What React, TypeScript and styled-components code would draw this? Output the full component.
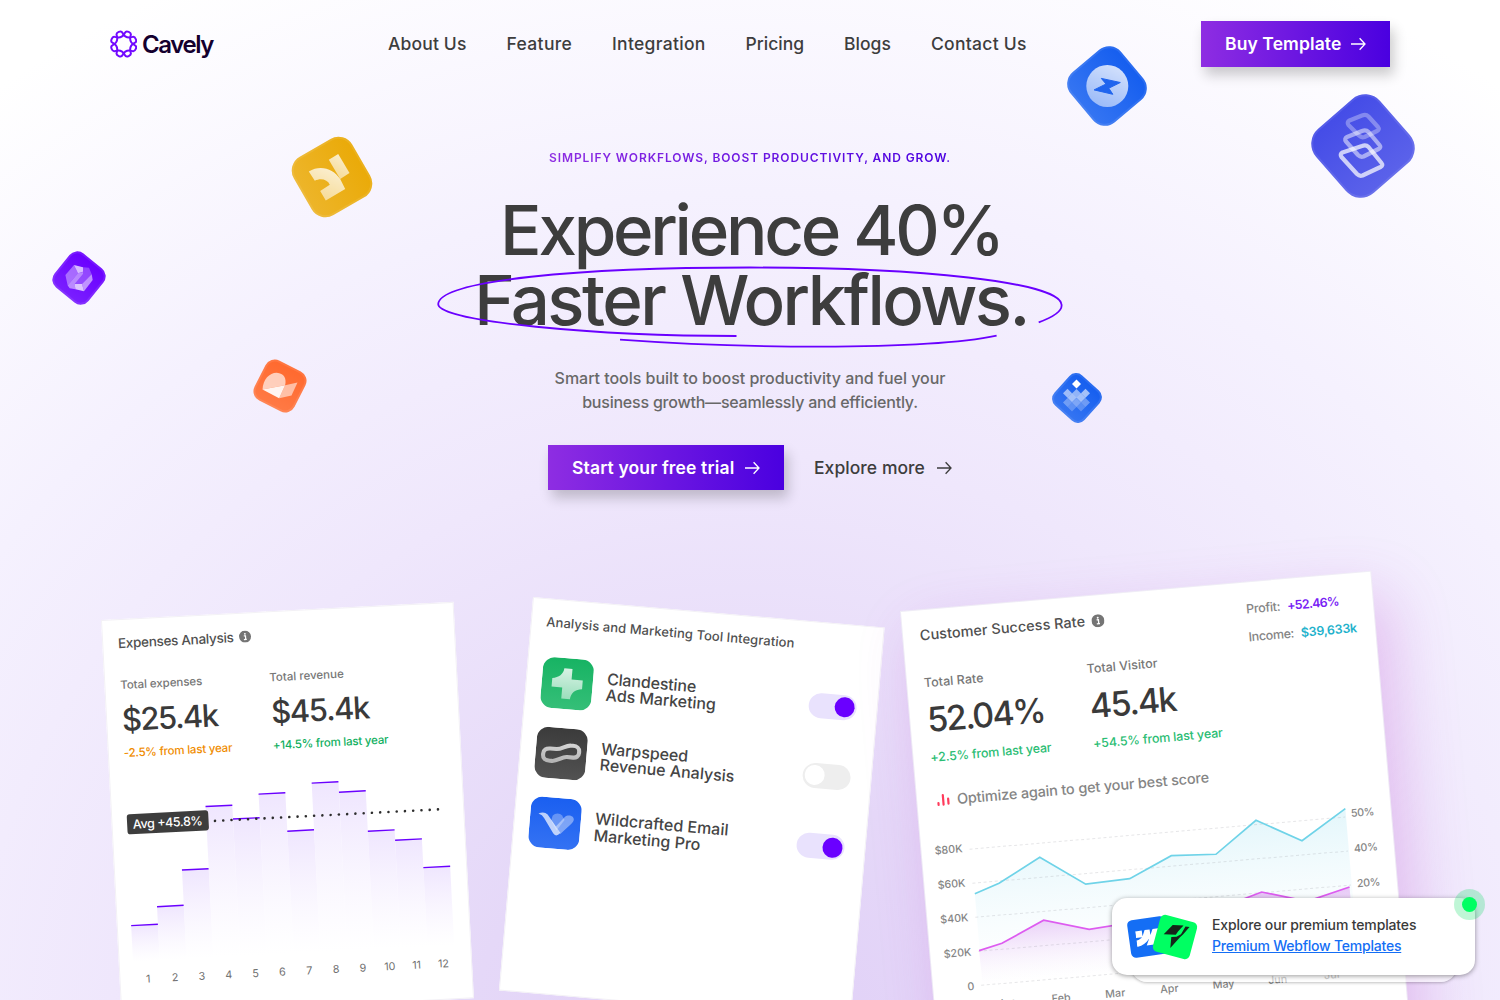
import React from "react";
import styled, { createGlobalStyle } from "styled-components";
import { SiWebflow } from "react-icons/si";

const Global = createGlobalStyle`
  * { box-sizing: border-box; }
  html, body { margin: 0; padding: 0; }
  body { font-family: Inter, "Liberation Sans", sans-serif; color: #3d3d3d; overflow: hidden; }
`;

const Page = styled.div`
  position: relative;
  width: 1500px;
  height: 1000px;
  overflow: hidden;
  background: radial-gradient(ellipse 1280px 1190px at 750px 1050px, #e0cff7 0%, #e5d8f8 22%, #efe7fc 50%, #f5f1fe 72%, #ffffff 100%);
`;

const T = styled.span<{ $ls?: number }>`
  display: block;
  white-space: nowrap;
  letter-spacing: ${(p) => p.$ls ?? 0}px;
`;

/* ---------- header ---------- */
const Header = styled.header`
  display: flex;
  align-items: center;
  padding: 21px 110px 0;
  height: 67px;
`;
const Logo = styled.div`
  display: flex;
  align-items: center;
  gap: 4.5px;
  width: 103px;
`;
const LogoName = styled(T)`
  margin-top: 2px;
  font-size: 24px;
  font-weight: 600;
  line-height: 28px;
  color: #14002e;
`;
const Nav = styled.nav`
  display: flex;
  gap: 40px;
  margin-left: 175px;
`;
const NavLink = styled(T)<{ $w: number }>`
  width: ${(p) => p.$w}px;
  font-size: 17.5px;
  font-weight: 500;
  line-height: 24px;
`;
const Button = styled.a<{ $w: number }>`
  display: flex;
  align-items: center;
  justify-content: space-between;
  width: ${(p) => p.$w}px;
  height: 45.5px;
  padding: 0 24px;
  color: #fff;
  font-size: 17.5px;
  line-height: 22px;
  font-weight: 600;
  background: linear-gradient(90deg, #8e2de2, #4a00e0);
  box-shadow: 4px 8px 12px rgba(0, 0, 0, 0.2);
`;
const HeaderAction = styled.div`
  margin-left: auto;
`;

/* ---------- hero ---------- */
const Hero = styled.section`
  display: flex;
  flex-direction: column;
  align-items: center;
  padding-top: 82.6px;
`;
const Eyebrow = styled(T)`
  font-size: 12px;
  font-weight: 600;
  line-height: 16px;
  color: transparent;
  background: linear-gradient(90deg, #8e2de2, #4a00e0);
  background-clip: text;
`;
const Title = styled.h1`
  position: relative;
  display: flex;
  flex-direction: column;
  align-items: center;
  margin: 29.4px 0 0;
  font-size: 69px;
  font-weight: 450;
  line-height: 70px;
`;
const TitleLine = styled(T)`
  padding-left: 2px;
`;
const Scribble = styled.svg`
  position: absolute;
  left: 50%;
  top: 65px;
  margin-left: -320px;
`;
const Lead = styled.div`
  display: flex;
  flex-direction: column;
  align-items: center;
  margin-top: 31px;
  font-size: 16px;
  font-weight: 450;
  line-height: 24px;
  color: #686868;
`;
const Actions = styled.div`
  display: flex;
  align-items: center;
  gap: 30px;
  margin-top: 31px;
`;
const MoreLink = styled.a`
  display: flex;
  align-items: center;
  justify-content: space-between;
  width: 138px;
  font-size: 17.5px;
  font-weight: 500;
`;

/* ---------- floating tiles ---------- */
const Tile = styled.svg<{ $x: number; $y: number }>`
  position: absolute;
  left: ${(p) => p.$x}px;
  top: ${(p) => p.$y}px;
`;

/* ---------- cards ---------- */
const Cards = styled.section`
  display: flex;
  align-items: flex-start;
  margin-top: 81.5px;
`;
const Card = styled.article<{ $w: number; $h: number; $ml: number; $mt: number; $deg: number; $pad: string; $glow?: boolean }>`
  flex: none;
  width: ${(p) => p.$w}px;
  height: ${(p) => p.$h}px;
  margin: ${(p) => p.$mt}px 0 0 ${(p) => p.$ml}px;
  padding: ${(p) => p.$pad};
  background: #fff;
  transform-origin: 0 0;
  transform: rotate(${(p) => p.$deg}deg);
  box-shadow: ${(p) => (p.$glow ? "0 0 0 1px rgba(240,240,245,.8), 14px 24px 60px rgba(186, 70, 205, 0.28)" : "inset 0 0 0 1px #f3f1f6")};
`;
const CardTitle = styled.div<{ $size: number; $lh: number }>`
  display: flex;
  align-items: center;
  gap: 6px;
  font-size: ${(p) => p.$size}px;
  line-height: ${(p) => p.$lh}px;
  font-weight: 500;
  color: #505050;
`;
const Stats = styled.div<{ $col: number; $mt: number }>`
  display: grid;
  grid-template-columns: ${(p) => p.$col}px auto;
  margin-top: ${(p) => p.$mt}px;
`;
const StatLabel = styled(T)<{ $size: number }>`
  font-size: ${(p) => p.$size}px;
  line-height: 16px;
  font-weight: 450;
  color: #777;
`;
const StatValue = styled(T)<{ $size: number; $lh: number; $mt: number }>`
  margin-top: ${(p) => p.$mt}px;
  font-size: ${(p) => p.$size}px;
  line-height: ${(p) => p.$lh}px;
  font-weight: 500;
  color: #3a3a3a;
`;
const StatDelta = styled(T)<{ $size: number; $lh: number; $mt: number; $color: string }>`
  margin-top: ${(p) => p.$mt}px;
  font-size: ${(p) => p.$size}px;
  line-height: ${(p) => p.$lh}px;
  font-weight: 500;
  color: ${(p) => p.$color};
`;
const Chart = styled.svg<{ $pull: number; $mt: number }>`
  display: block;
  overflow: visible;
  margin: ${(p) => p.$mt}px 0 0 -${(p) => p.$pull}px;
`;
const Tools = styled.div`
  display: flex;
  flex-direction: column;
  gap: 19.3px;
  margin-top: 26px;
`;
const Tool = styled.div`
  display: flex;
  align-items: center;
  width: 316px;
`;
const ToolName = styled.div`
  flex: 1;
  margin-left: 14.5px;
  font-size: 16px;
  line-height: 16.6px;
  font-weight: 500;
  color: #454545;
`;
const Switch = styled.div<{ $on: boolean }>`
  display: flex;
  align-items: center;
  justify-content: ${(p) => (p.$on ? "flex-end" : "flex-start")};
  width: 48px;
  height: 25px;
  padding: 0 2px;
  border-radius: 13px;
  background: ${(p) => (p.$on ? "#e9e2fd" : "#eeeeee")};
`;
const Knob = styled.div<{ $on: boolean }>`
  width: 20px;
  height: 20px;
  border-radius: 50%;
  background: ${(p) => (p.$on ? "#6a00ff" : "#fff")};
`;
const TopRow = styled.div`
  display: flex;
  align-items: flex-start;
  justify-content: space-between;
`;
const Meta = styled.div`
  display: grid;
  gap: 9.8px;
  width: 109.5px;
  margin-top: 2.7px;
`;
const MetaRow = styled.div<{ $color: string }>`
  display: flex;
  gap: 7px;
  font-size: 12.5px;
  line-height: 18px;
  font-weight: 500;
  color: #858585;
  & > :last-child { color: ${(p) => p.$color}; font-weight: 600; }
`;
const Hint = styled.div`
  display: flex;
  align-items: center;
  gap: 7px;
  margin: 24px 0 0 2px;
  font-size: 14.5px;
  font-weight: 470;
  line-height: 20px;
  color: #858585;
`;

/* ---------- promo popup ---------- */
const Promo = styled.aside`
  position: absolute;
  left: 1112px;
  top: 898px;
  width: 363px;
  height: 77px;
`;
const PromoBack = styled.div`
  position: absolute;
  left: 19px;
  right: 18px;
  top: 20px;
  bottom: -7px;
  border-radius: 16px;
  background: rgba(255, 255, 255, 0.6);
  box-shadow: 0 1px 3px rgba(0, 0, 0, 0.25);
`;
const PromoBox = styled.div`
  position: relative;
  display: flex;
  align-items: center;
  height: 77px;
  padding: 0 15px;
  border-radius: 15px;
  background: #fff;
  box-shadow: 0 1px 5px rgba(0, 0, 0, 0.4);
`;
const PromoIcons = styled.div`
  display: flex;
  align-items: center;
  width: 85px;
`;
const Badge = styled.div<{ $bg: string; $deg: number; $ml: number }>`
  display: flex;
  align-items: center;
  justify-content: center;
  width: 38px;
  height: 38px;
  margin-left: ${(p) => p.$ml}px;
  border-radius: 5px;
  background: ${(p) => p.$bg};
  color: #fff;
  transform: rotate(${(p) => p.$deg}deg);
`;
const PromoText = styled.div`
  margin-top: -3px;
  font-size: 14px;
  line-height: 21px;
  font-weight: 500;
  color: #3a3a3a;
`;
const PromoLink = styled(T)`
  color: #146ef5;
  text-decoration: underline;
`;
const Pulse = styled.div`
  position: absolute;
  right: -10px;
  top: -9.5px;
  width: 31px;
  height: 31px;
  padding: 8px;
  border-radius: 50%;
  background: rgba(0, 220, 90, 0.25);
  &::after { content: ""; display: block; width: 15px; height: 15px; border-radius: 50%; background: #00ff62; }
`;

const Arrow = () => (
  <svg width="15" height="14" viewBox="0 0 15 14" fill="none" stroke="currentColor" strokeWidth="1.3">
    <path d="M0 7h14M8.6 1.2 14 7l-5.4 5.8" />
  </svg>
);

const polar = (r: number, deg: number) => {
  const a = (deg * Math.PI) / 180;
  return `${(14 + r * Math.cos(a)).toFixed(2)} ${(14 + r * Math.sin(a)).toFixed(2)}`;
};
const loop = (start: number) => {
  let d = `M${polar(11.6, start - 16)}`;
  for (let k = 0; k < 4; k++) {
    const a = start + k * 90;
    d += `C${polar(14.4, a - 12)} ${polar(14.4, a + 12)} ${polar(11.6, a + 16)}`;
    d += `Q${polar(5.2, a + 45)} ${polar(11.6, a + 74)}`;
  }
  return d + "Z";
};
const LogoMark = () => (
  <svg width="28" height="28" viewBox="0 0 28 28" fill="none" stroke="#7209ff" strokeWidth="2" strokeLinejoin="round">
    <path d={loop(22.5)} />
    <path d={loop(67.5)} />
  </svg>
);

const Info = ({ size }: { size: number }) => (
  <svg width={size} height={size} viewBox="0 0 12 12">
    <circle cx="6" cy="6" r="6" fill="#757575" />
    <circle cx="6" cy="3.2" r="0.9" fill="#fff" />
    <path d="M4.8 5.2h1.7v3.6M4.7 8.9h2.9" stroke="#fff" strokeWidth="1.2" fill="none" />
  </svg>
);

type Box = { id: string; cx: number; cy: number; half: number; s: number; r: number; deg: number; from: string; to: string; children: React.ReactNode };
const FloatTile = ({ id, cx, cy, half, s, r, deg, from, to, children }: Box) => (
  <Tile $x={cx - half} $y={cy - half} width={half * 2} height={half * 2} viewBox={`${cx - half} ${cy - half} ${half * 2} ${half * 2}`}>
    <defs>
      <linearGradient id={id} x1="0" y1="0" x2="0" y2="1">
        <stop offset="0" stopColor={from} />
        <stop offset="1" stopColor={to} />
      </linearGradient>
      <linearGradient id={`${id}w`} x1="0.8" y1="0" x2="0.3" y2="1">
        <stop offset="0" stopColor="#fff" stopOpacity="0.82" />
        <stop offset="1" stopColor="#fff" stopOpacity="0.52" />
      </linearGradient>
    </defs>
    <g transform={`rotate(${deg} ${cx} ${cy})`}>
      <rect x={cx - s / 2} y={cy - s / 2} width={s} height={s} rx={r} fill={`url(#${id})`} />
      <rect x={cx - s / 2 + 1} y={cy - s / 2 + 1} width={s - 2} height={s - 2} rx={r - 1} fill="none" stroke="#fff" strokeOpacity="0.09" strokeWidth="2" />
    </g>
    {children}
  </Tile>
);

const diamond = (x: number, y: number, h: number) => `M${x} ${y - h}l${h} ${h}l${-h} ${h}l${-h} ${-h}Z`;
const pixels: [number, number, number][] = [
  [1076.7, 384, 1], [1067.7, 393.2, 0.55], [1085.7, 393.2, 0.6], [1076.7, 393.4, 0.5],
  [1072.2, 397.8, 0.58], [1081.2, 397.8, 0.58], [1067.7, 402.4, 0.32], [1085.7, 402.4, 0.34],
  [1076.7, 402.4, 0.4], [1072.2, 407, 0.24], [1081.2, 407, 0.24],
];

const bars = [306.8, 289.2, 253.9, 191.7, 205.6, 182, 220.5, 173.8, 184.2, 224.7, 235.1, 263.9];
const dots = Array.from({ length: 28 }, (_, i) => 103.5 + i * 8.27);

const ExpensesChart = () => (
  <Chart $pull={15.5} $mt={7.8} width="353" height="230" viewBox="0 150 353 230">
    <defs>
      <linearGradient id="barTop" x1="0" y1="0" x2="0" y2="1">
        <stop offset="0" stopColor="#efe6fe" />
        <stop offset="1" stopColor="#fff" stopOpacity="0.6" />
      </linearGradient>
    </defs>
    {bars.map((y, i) => (
      <g key={i}>
        <rect x={14.4 + i * 26.8} y={y} width="26.8" height={343 - y} fill="url(#barTop)" />
        <rect x={14.4 + i * 26.8} y={y - 0.7} width="26.8" height="1.4" fill="#6a00ff" />
        <text x={28.8 + i * 26.87} y="364.5" fontSize="10.8" fill="#707070" textAnchor="middle">{i + 1}</text>
      </g>
    ))}
    {dots.map((x) => <circle key={x} cx={x} cy="206.5" r="1.3" fill="#2d2d2d" />)}
    <rect x="15.6" y="195.4" width="81.5" height="20.2" rx="3" fill="#3d3d3d" />
    <text x="21.3" y="210" fontSize="12.5" fontWeight="500" fill="#fff" textLength="70">Avg +45.8%</text>
  </Chart>
);

const blue = "49.5,287 74.5,278.7 117.3,256.2 160.8,287 205.1,285.2 248.5,265.9 293.1,268.3 335.9,237.8 380,262.1 425.9,233.9";
const pink = "48.9,344.1 72.3,338.7 115.8,319.3 160.4,332.2 205,329 249,315 293,322 335.4,309.8 380,323 423.4,312.3";
const SuccessChart = () => (
  <Chart $pull={17} $mt={24.3} width="471" height="190" viewBox="0 225 471 190">
    <defs>
      <linearGradient id="ab" x1="0" y1="0" x2="0" y2="1">
        <stop offset="0" stopColor="#e3f6fb" />
        <stop offset="1" stopColor="#fff" stopOpacity="0.3" />
      </linearGradient>
      <linearGradient id="ap" x1="0" y1="0" x2="0" y2="1">
        <stop offset="0" stopColor="#e3bdf5" stopOpacity="0.9" />
        <stop offset="1" stopColor="#fff" stopOpacity="0.2" />
      </linearGradient>
    </defs>
    <polygon points={`49.5,379 ${blue} 425.9,379`} fill="url(#ab)" />
    <polygon points={`49.5,379 ${pink} 423.4,379`} fill="url(#ap)" />
    {[0, 1, 2, 3, 4].map((i) => (
      <path key={i} d={`M48 ${242.2 + i * 34.15}H425`} stroke="#8c8c96" strokeOpacity="0.22" strokeDasharray="3 2.6" />
    ))}
    <polyline points={blue} fill="none" stroke="#6fd3e8" strokeWidth="1.7" />
    <polyline points={pink} fill="none" stroke="#dd5cf0" strokeWidth="1.7" />
    <g fontSize="10.7" fill="#858585" fontWeight="550">
      {["$80K", "$60K", "$40K", "$20K", "0"].map((t, i) => (
        <text key={t} x="41" y={244.5 + i * 34.6} textAnchor="end">{t}</text>
      ))}
      {["50%", "40%", "20%"].map((t, i) => (
        <text key={t} x="431" y={242.8 + i * 35.2} letterSpacing="-0.3">{t}</text>
      ))}
      {["Jan", "Feb", "Mar", "Apr", "May", "Jun", "Jul"].map((t, i) => (
        <text key={t} x={72.3 + i * 54.3} y="402" textAnchor="middle">{t}</text>
      ))}
    </g>
  </Chart>
);

const ToolIcon = ({ from, to, children }: { from: string; to: string; children: React.ReactNode }) => (
  <svg width="51" height="51" viewBox="0 0 50 50">
    <defs>
      <linearGradient id={`t${from.slice(1)}`} x1="0" y1="0" x2="0" y2="1">
        <stop offset="0" stopColor={from} />
        <stop offset="1" stopColor={to} />
      </linearGradient>
      <linearGradient id="glyph" gradientUnits="userSpaceOnUse" x1="0" y1="8" x2="0" y2="42">
        <stop offset="0" stopColor="#fff" stopOpacity="0.85" />
        <stop offset="1" stopColor="#fff" stopOpacity="0.5" />
      </linearGradient>
    </defs>
    <rect width="50" height="50" rx="11.5" fill={`url(#t${from.slice(1)})`} />
    {children}
  </svg>
);

const nav: [string, number, number][] = [
  ["About Us", 78.5, 0.15], ["Feature", 65.5, 0.35], ["Integration", 93.5, 0.3],
  ["Pricing", 58.5, 0], ["Blogs", 47, 0.05], ["Contact Us", 96, 0.28],
];

export default function App() {
  return (
    <Page>
      <Global />
      <Header>
        <Logo>
          <LogoMark />
          <LogoName $ls={-1.4}>Cavely</LogoName>
        </Logo>
        <Nav>
          {nav.map(([label, w, ls]) => <NavLink key={label} $w={w} $ls={ls}>{label}</NavLink>)}
        </Nav>
        <HeaderAction>
          <Button $w={189}><T $ls={0.1}>Buy Template</T><Arrow /></Button>
        </HeaderAction>
      </Header>

      <Hero>
        <Eyebrow $ls={0.9}>SIMPLIFY WORKFLOWS, BOOST PRODUCTIVITY, AND GROW.</Eyebrow>
        <Title>
          <TitleLine $ls={-3.25}>Experience 40%</TitleLine>
          <TitleLine $ls={-2.55}>Faster Workflows.</TitleLine>
          <Scribble width="640" height="90" viewBox="430 260 640 90" fill="none" stroke="#6a00ff" strokeWidth="1.8">
            <path d="M1038.7 322.3C1056 316 1063 310 1061.4 304C1058 282 920 267.5 750 267.5C580 267.5 440 280 438.2 304C438 322 600 336 736.5 336" />
            <path d="M620 339.7C700 345.5 760 346.7 820 346.7C900 346.5 960 343.5 996.6 335.7" />
          </Scribble>
        </Title>
        <Lead>
          <T $ls={-0.03}>Smart tools built to boost productivity and fuel your</T>
          <T $ls={-0.22}>business growth—seamlessly and efficiently.</T>
        </Lead>
        <Actions>
          <Button $w={236}><T $ls={0.15}>Start your free trial</T><Arrow /></Button>
          <MoreLink><T $ls={0.05}>Explore more</T><Arrow /></MoreLink>
        </Actions>
      </Hero>

      <Cards>
        <Card $w={353} $h={397} $ml={101} $mt={48} $deg={-2.95} $pad="14.8px 15.8px">
          <CardTitle $size={13.5} $lh={18}><T $ls={-0.3}>Expenses Analysis</T><Info size={12} /></CardTitle>
          <Stats $col={149.3} $mt={25.5}>
            <div>
              <StatLabel $size={11.5} $ls={-0.05}>Total expenses</StatLabel>
              <StatValue $size={31} $lh={36} $mt={9} $ls={-1.5}>$25.4k</StatValue>
              <StatDelta $size={11.5} $lh={16} $mt={7} $color="#f08c00" $ls={-0.2}>-2.5% from last year</StatDelta>
            </div>
            <div>
              <StatLabel $size={11.5}>Total revenue</StatLabel>
              <StatValue $size={31} $lh={36} $mt={9} $ls={-1.3}>$45.4k</StatValue>
              <StatDelta $size={11.5} $lh={16} $mt={7} $color="#12b05f" $ls={-0.22}>+14.5% from last year</StatDelta>
            </div>
          </Stats>
          <ExpensesChart />
        </Card>

        <Card $w={353} $h={395} $ml={78.6} $mt={25} $deg={4.95} $pad="13.6px 15.5px">
          <CardTitle $size={13} $lh={18}><T $ls={0.08}>Analysis and Marketing Tool Integration</T></CardTitle>
          <Tools>
            <Tool>
              <ToolIcon from="#17b363" to="#35bf78">
                <path d="M21 10h8v10.500h11v8.500c-6.500 1-10.500 4-11 11h-8.500v-11h-10.500v-8.500c6.500-1 10.500-4.500 11-10.500Z" fill="url(#glyph)" />
              </ToolIcon>
              <ToolName><T $ls={-0.15}>Clandestine</T><T $ls={-0.05}>Ads Marketing</T></ToolName>
              <Switch $on><Knob $on /></Switch>
            </Tool>
            <Tool>
              <ToolIcon from="#3b3b3b" to="#525252">
                <path d="M14 21H20C25 21 29 16.500 34 16.500H36C40 16.500 42.500 18.500 42.500 21.500V23C42.500 26.500 40 28 37 28H31C26 28 22 33 16.500 33H14.500C10 33 7.500 31 7.500 28V26.500C7.500 23 10 21 14 21Z" fill="none" stroke="url(#glyph)" strokeWidth="4" />
              </ToolIcon>
              <ToolName><T $ls={-0.05}>Warpspeed</T><T $ls={0}>Revenue Analysis</T></ToolName>
              <Switch $on={false}><Knob $on={false} /></Switch>
            </Tool>
            <Tool>
              <ToolIcon from="#1a5ff0" to="#3472f3">
                <path d="M22 18c3-4 8-3 10 0l2 3-7 11-6-9Z" fill="#fff" opacity=".3" />
                <path d="M34 18c3-3 9-2 9 2 0 1.500-1 3-2 4L31 35l-5-7Z" fill="#fff" opacity=".4" />
                <path d="M8 17q5-3 9 0l14 17q-4 5-7 1L14 21q-2-3-6-4Z" fill="#fff" opacity=".7" />
              </ToolIcon>
              <ToolName><T $ls={0}>Wildcrafted Email</T><T $ls={0}>Marketing Pro</T></ToolName>
              <Switch $on><Knob $on /></Switch>
            </Tool>
          </Tools>
        </Card>

        <Card $w={470.5} $h={460} $ml={15.4} $mt={40} $deg={-4.9} $pad="15.1px 16.8px" $glow>
          <TopRow>
            <CardTitle $size={14.5} $lh={20}><T $ls={0.02}>Customer Success Rate</T><Info size={13} /></CardTitle>
            <Meta>
              <MetaRow $color="#7a1ff5"><T $ls={-0.3}>Profit:</T><T $ls={-0.75}>+52.46%</T></MetaRow>
              <MetaRow $color="#1fb2cc"><T $ls={-0.35}>Income:</T><T $ls={-0.3}>$39,633k</T></MetaRow>
            </Meta>
          </TopRow>
          <Stats $col={163.3} $mt={1.5}>
            <div>
              <StatLabel $size={12.500} $ls={0.05}>Total Rate</StatLabel>
              <StatValue $size={34} $lh={40} $mt={9.2} $ls={-2}>52.04%</StatValue>
              <StatDelta $size={12.500} $lh={18} $mt={8.500} $color="#2bbd74" $ls={-0.18}>+2.5% from last year</StatDelta>
            </div>
            <div>
              <StatLabel $size={12.500}>Total Visitor</StatLabel>
              <StatValue $size={34} $lh={40} $mt={9.2} $ls={-1.6}>45.4k</StatValue>
              <StatDelta $size={12.500} $lh={18} $mt={8.500} $color="#2bbd74" $ls={-0.15}>+54.5% from last year</StatDelta>
            </div>
          </Stats>
          <Hint>
            <svg width="14" height="13" viewBox="0 0 14 13" stroke="#ff3b5c" strokeWidth="2.200" strokeLinecap="round">
              <path d="M2 9.500v2M7 2v9.500M12 6v5" />
            </svg>
            <T $ls={-0.16}>Optimize again to get your best score</T>
          </Hint>
          <SuccessChart />
        </Card>
      </Cards>

      <FloatTile id="yl" cx={331.5} cy={177.3} half={42} s={67.5} r={16} deg={60} from="#eaaa08" to="#edb52a">
        <path d="M328.300 160L337.700 154.300L349 173.300L339.700 179.300Z" fill="url(#ylw)" />
        <path d="M308.300 171.700C320 164.500 333 169 339.700 179.300L344.700 189.300L325.300 200.700L319.700 191.300L329.300 185C327 179.500 320 178 314.300 181Z" fill="url(#ylw)" />
      </FloatTile>
      <FloatTile id="bl" cx={1106.7} cy={86} half={41} s={65.500} r={15.500} deg={50} from="#155eef" to="#3575f2">
        <circle cx="1107" cy="86" r="21" fill="url(#blw)" />
        <path d="M1101 78.400L1120 82.500L1108.500 88.200L1112.500 94.300L1093.800 89.900L1105.700 84Z" fill="#1f64ee" stroke="#1f64ee" strokeLinejoin="round" />
      </FloatTile>
      <FloatTile id="in" cx={1363} cy={146} half={53} s={85} r={20} deg={-41} from="#444ce7" to="#5b62ea">
        <g fill="none" stroke="#fff" strokeWidth="4.200" strokeLinejoin="round">
          <path d="M1362 115.500q4-1.500 6.500 1l9.500 10.500q2 2.500-1 4l-12.500 6q-3 1-5.500-1.500l-10.500-10.500q-2-3 1-4.500Z" opacity=".32" />
          <path d="M1362 131q4-1.500 6.500 1l11 13q2 2.500-1 4l-15 7.500q-3 1-5.500-1.500l-12-13.500q-2-3 1-4.500Z" opacity=".5" />
          <path d="M1362 146q4-1.500 6.500 1l13 16q2 2.500-1 4l-18 8.500q-3 1-5.500-1.500l-15.500-17q-2-3 1-4.500Z" opacity=".72" />
        </g>
      </FloatTile>
      <FloatTile id="pu" cx={79.3} cy={278} half={28} s={43.700} r={10} deg={39} from="#6a00ff" to="#7a1fff">
        <g fill="#fff">
          <path d="M65.700 275L74.300 265L78.300 273.300L68 285.500Z" opacity=".38" />
          <path d="M74.300 265L83.300 267.300V271.700L78.300 273.300Z" opacity=".72" />
          <path d="M83.300 267.300L89.300 267.700L92 274.300L82.300 284L75 284L83.300 274Z" opacity=".25" />
          <path d="M68 285.500L78.300 273.300L83.300 272V274L75 284L75.700 289.300L70 288.300Z" opacity=".5" />
          <path d="M92 274.300L93 280L84.300 291.300L82.300 284Z" opacity=".55" />
          <path d="M75 284H82.300L84.300 291.300L75.700 289.300Z" opacity=".75" />
        </g>
      </FloatTile>
      <FloatTile id="or" cx={280.2} cy={385.700} half={28} s={44.8} r={10.500} deg={27} from="#ff692e" to="#ff7a45">
        <g fill="#fff">
          <path d="M262.700 389.300C263 379 270 372.300 277 372.500C284 373 287 378 285.300 385Z" opacity=".66" />
          <path d="M262.700 389.300L285.300 385L279.300 398Z" opacity=".93" />
          <path d="M285.300 385L297.700 382.300L291.700 395.300L279.300 398Z" opacity=".55" />
        </g>
      </FloatTile>
      <FloatTile id="sb" cx={1077.2} cy={398} half={26} s={40.5} r={9} deg={42} from="#155eef" to="#3575f2">
        <g fill="#fff">
          {pixels.map(([x, y, o]) => <path key={`${x}-${y}`} d={diamond(x, y, 4.5)} opacity={o} />)}
        </g>
      </FloatTile>

      <Promo>
        <PromoBack />
        <PromoBox>
          <PromoIcons>
            <Badge $bg="#146ef5" $deg={-8} $ml={2}><SiWebflow size={25} /></Badge>
            <Badge $bg="#00ff62" $deg={15} $ml={-11}>
              <svg width="26" height="30" viewBox="0 0 26 30" fill="#15251a" overflow="visible">
                <g transform="rotate(-15 13 15)">
                  <path d="M10.700 3L21.500 3.500L16 9.500L13.800 12.700L1.700 12.300Z" />
                  <path d="M23.500 4.600L27.500 5L21 12.500L18 15.200L8.300 26L9.300 15L14.500 14.800L19 12.200Z" />
                </g>
              </svg>
            </Badge>
          </PromoIcons>
          <PromoText>
            <T $ls={-0.14}>Explore our premium templates</T>
            <PromoLink $ls={-0.22}>Premium Webflow Templates</PromoLink>
          </PromoText>
        </PromoBox>
        <Pulse />
      </Promo>
    </Page>
  );
}
